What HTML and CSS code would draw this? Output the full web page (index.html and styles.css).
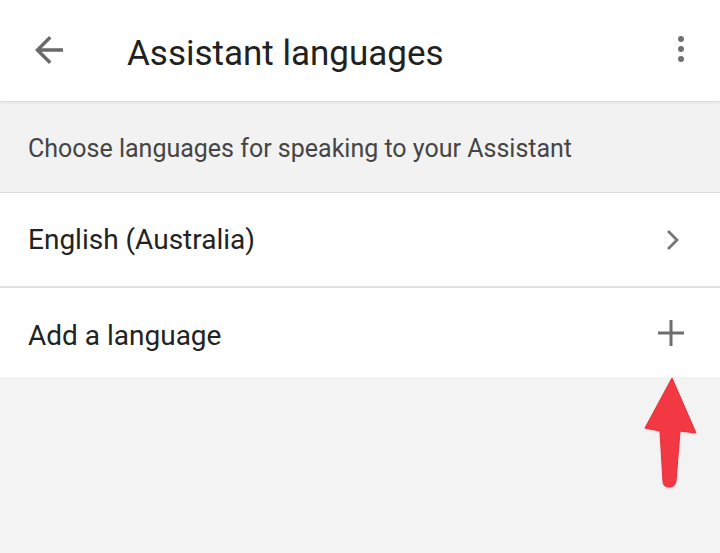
FILE: index.html
```html
<!DOCTYPE html>
<html lang="en">
<head>
<meta charset="utf-8">
<title>Assistant languages</title>
<link rel="stylesheet" href="styles.css">
</head>
<body>
<div class="screen">
  <header class="appbar">
    <button class="icon-btn back" aria-label="Back">
      <svg viewBox="0 0 24 24" width="42" height="42"><path d="M20 11H7.83l5.59-5.59L12 4l-8 8 8 8 1.41-1.41L7.83 13H20v-2z" fill="#6a6a6a"/></svg>
    </button>
    <h1 class="title">Assistant languages</h1>
    <button class="icon-btn more" aria-label="More options">
      <span class="dot"></span><span class="dot"></span><span class="dot"></span>
    </button>
  </header>
  <div class="intro">Choose languages for speaking to your Assistant</div>
  <ul class="list">
    <li class="row first">
      <span class="label">English (Australia)</span>
      <svg class="chev" viewBox="0 0 14 22" width="14" height="22"><path d="M2 2l9 9-9 9" fill="none" stroke="#767676" stroke-width="2.8"/></svg>
    </li>
    <li class="row second">
      <span class="label">Add a language</span>
      <svg class="plus" viewBox="0 0 26 26" width="26" height="26"><path d="M0 13h26M13 0v26" fill="none" stroke="#6e6e6e" stroke-width="3"/></svg>
    </li>
  </ul>
  <svg class="pointer" viewBox="0 0 60 120" width="60" height="120">
    <path d="M31 3 L55 58 L39 56 L35 106 Q34 112 28 112 Q22 112 22 106 L19 56 L4 53 Z" fill="#f23843" stroke="#e52e3a" stroke-width="1" stroke-linejoin="round"/>
  </svg>
</div>
</body>
</html>
```
FILE: styles.css
```css
* { box-sizing: border-box; }
html, body { margin: 0; padding: 0; }
body {
  width: 720px;
  height: 553px;
  background: #f3f3f3;
  font-family: Roboto, "Noto Sans", Arial, sans-serif;
  overflow: hidden;
}
.screen {
  position: relative;
  width: 720px;
  height: 553px;
}
.appbar {
  height: 102px;
  background: #fff;
  border-bottom: 1px solid #dedede;
  display: flex;
  align-items: center;
  padding: 0 0 0 28px;
  box-shadow: 0 2px 3px rgba(0,0,0,0.04);
  position: relative;
  z-index: 1;
}
.icon-btn {
  border: 0;
  background: none;
  padding: 0;
  margin: 0;
}
.back {
  width: 42px;
  height: 42px;
  display: flex;
  margin-top: -2px;
}
.title {
  margin: 0 0 0 57px;
  font-size: 35px;
  font-weight: 400;
  color: #212121;
  letter-spacing: 0;
  flex: 1;
  margin-top: 6px;
}
.more {
  width: 14px;
  display: flex;
  flex-direction: column;
  align-items: center;
  gap: 4px;
  margin-right: 32px;
  margin-top: -4px;
}
.dot {
  width: 6px;
  height: 6px;
  border-radius: 50%;
  background: #707070;
}
.intro {
  height: 91px;
  background: #f2f2f2;
  border-bottom: 1px solid #dcdcdc;
  display: flex;
  align-items: center;
  padding-left: 28px;
  padding-top: 2px;
  font-size: 25px;
  color: #454545;
}
.list {
  list-style: none;
  margin: 0;
  padding: 0;
  background: #fff;
}
.row {
  display: flex;
  align-items: center;
  justify-content: space-between;
  padding: 0 40px 0 28px;
  font-size: 28px;
  color: #222;
}
.row.first {
  height: 95px;
  border-bottom: 2px solid #e0e0e0;
}
.row.second {
  height: 89px;
  padding-right: 36px;
  padding-top: 6px;
}
.plus {
  margin-top: -6px;
}
.pointer {
  position: absolute;
  left: 641px;
  top: 375px;
  filter: drop-shadow(0 1px 1px rgba(0,0,0,0.12));
}
```
